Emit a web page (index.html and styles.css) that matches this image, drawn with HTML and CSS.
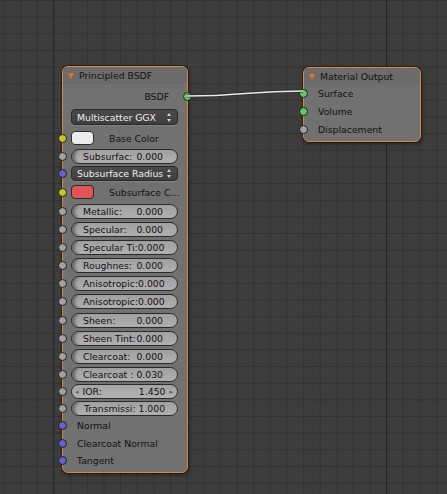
FILE: index.html
```html
<!DOCTYPE html>
<html>
<head>
<meta charset="utf-8">
<link rel="stylesheet" href="styles.css">
</head>
<body>
<div class="canvas">
  <svg class="wire" width="447" height="494" viewBox="0 0 447 494">
    <path d="M187 96 C245 96 245 91 303 91" fill="none" stroke="#2a2a2a" stroke-width="3.2"/>
    <path d="M187 96 C245 96 245 91 303 91" fill="none" stroke="#ececec" stroke-width="1.6"/>
  </svg>

  <div class="node bsdf">
    <div class="header"><span class="tri"></span><span class="title">Principled BSDF</span></div>
    <div class="row out"><span class="label">BSDF</span><span class="sock sock-out green"></span></div>
    <div class="row r24"><div class="dropdown"><span>Multiscatter GGX</span><span class="updown"></span></div></div>
    <div class="row"><span class="sock yellow"></span><span class="swatch white"></span><span class="label swl">Base Color</span></div>
    <div class="row"><span class="sock gray"></span><div class="slider"><span>Subsurfac:</span><span>0.000</span></div></div>
    <div class="row r17"><span class="sock blue"></span><div class="dropdown small"><span>Subsurface Radius</span><span class="updown"></span></div></div>
    <div class="row r20"><span class="sock yellow"></span><span class="swatch red"></span><span class="label swl">Subsurface C...</span></div>
    <div class="row"><span class="sock gray"></span><div class="slider"><span>Metallic:</span><span>0.000</span></div></div>
    <div class="row"><span class="sock gray"></span><div class="slider"><span>Specular:</span><span>0.000</span></div></div>
    <div class="row"><span class="sock gray"></span><div class="slider"><span>Specular Ti:</span><span>0.000</span></div></div>
    <div class="row"><span class="sock gray"></span><div class="slider"><span>Roughnes:</span><span>0.000</span></div></div>
    <div class="row"><span class="sock gray"></span><div class="slider"><span>Anisotropic:</span><span>0.000</span></div></div>
    <div class="row r19"><span class="sock gray"></span><div class="slider"><span>Anisotropic:</span><span>0.000</span></div></div>
    <div class="row"><span class="sock gray"></span><div class="slider"><span>Sheen:</span><span>0.000</span></div></div>
    <div class="row"><span class="sock gray"></span><div class="slider"><span>Sheen Tint:</span><span>0.000</span></div></div>
    <div class="row"><span class="sock gray"></span><div class="slider"><span>Clearcoat:</span><span>0.000</span></div></div>
    <div class="row"><span class="sock gray"></span><div class="slider"><span>Clearcoat :</span><span>0.030</span></div></div>
    <div class="row r17"><span class="sock gray"></span><div class="slider num"><span class="arr">&#9666;</span><span class="nl">IOR:</span><span class="nv">1.450</span><span class="arr">&#9656;</span></div></div>
    <div class="row r17"><span class="sock gray"></span><div class="slider center"><span>Transmissi: 1.000</span></div></div>
    <div class="row r17"><span class="sock blue"></span><span class="label">Normal</span></div>
    <div class="row"><span class="sock blue"></span><span class="label">Clearcoat Normal</span></div>
    <div class="row r17"><span class="sock blue"></span><span class="label">Tangent</span></div>
  </div>

  <div class="node output">
    <div class="header"><span class="tri"></span><span class="title">Material Output</span></div>
    <div class="row r17"><span class="sock green"></span><span class="label">Surface</span></div>
    <div class="row"><span class="sock green"></span><span class="label">Volume</span></div>
    <div class="row"><span class="sock gray"></span><span class="label">Displacement</span></div>
  </div>
</div>
</body>
</html>
```

FILE: styles.css
```css
* { box-sizing: border-box; }
html, body { margin: 0; padding: 0; background: #3d3d3d; }
.canvas {
  position: relative;
  width: 447px;
  height: 494px;
  overflow: hidden;
  background-color: #3d3d3d;
  background-image:
    linear-gradient(to right, #252525 1px, transparent 1px),
    linear-gradient(to right, #323232 1px, transparent 1px),
    linear-gradient(to bottom, #323232 1px, transparent 1px);
  background-size: 333px 100%, 16.65px 100%, 100% 16.65px;
  background-position: 53px 0, 3.6px 0, 0 0;
  font-family: "DejaVu Sans", sans-serif;
  font-size: 9.3px;
  color: #111;
}
.wire { position: absolute; left: 0; top: 0; z-index: 2; }
.node {
  position: absolute;
  z-index: 1;
  background: #717171;
  border: 1px solid #d98a3c;
  border-radius: 6px;
  box-shadow: 0 0 0 1px rgba(0,0,0,0.35), 1px 2px 4px rgba(0,0,0,0.4);
  display: flex;
  flex-direction: column;
  padding: 0 8px 3px 8px;
}
.bsdf { left: 62px; top: 66px; width: 126px; height: 407px; }
.output { left: 303px; top: 67px; width: 118px; height: 75px; }
.header {
  height: 17px;
  margin: 0 -8px 3px -8px;
  padding: 0 0 0 5px;
  display: flex;
  align-items: center;
  background: #6c6c6c;
  border-radius: 5px 5px 0 0;
}
.output .header { margin-bottom: 0; }
.tri {
  width: 0; height: 0;
  border-left: 3.5px solid transparent;
  border-right: 3.5px solid transparent;
  border-top: 6px solid #e0701e;
  margin-right: 5px;
}
.title { color: #111; white-space: nowrap; }
.row {
  position: relative;
  height: 18px;
  display: flex;
  align-items: center;
  flex: none;
}
.r17 { height: 17px; }
.r19 { height: 19px; }
.r20 { height: 20px; }
.r24 { height: 24px; }
.out { justify-content: flex-end; }
.sock {
  position: absolute;
  left: -13px;
  top: 50%;
  width: 9px;
  height: 9px;
  margin-top: -4.5px;
  border-radius: 50%;
  border: 1px solid #1e1e1e;
  z-index: 3;
}
.output .sock { left: -13px; }
.sock-out { left: auto; right: -13px; }
.green { background: #63c763; }
.gray { background: #a1a1a1; }
.yellow { background: #c7c729; }
.blue { background: #6363c7; }
.label { white-space: nowrap; color: #111; padding-left: 6px; }
.out .label { padding-left: 0; padding-right: 10px; }
.output .label { padding-left: 6px; }
.swl { padding-left: 15px; }
.dropdown {
  width: 107px;
  height: 16px;
  background: linear-gradient(#4a4a4a, #3e3e3e);
  border: 1px solid #2a2a2a;
  border-radius: 4px;
  color: #f0f0f0;
  display: flex;
  align-items: center;
  justify-content: space-between;
  padding: 0 5px 0 5px;
  white-space: nowrap;
  box-shadow: 0 1px 0 rgba(255,255,255,0.12);
}
.dropdown.small { height: 15px; }
.updown {
  position: relative;
  width: 5px;
  height: 9px;
}
.updown::before, .updown::after {
  content: "";
  position: absolute;
  left: 0;
  border-left: 2.5px solid transparent;
  border-right: 2.5px solid transparent;
}
.updown::before { top: 0; border-bottom: 3px solid #cfcfcf; }
.updown::after { bottom: 0; border-top: 3px solid #cfcfcf; }
.swatch {
  width: 23px;
  height: 14px;
  border-radius: 4px;
  border: 1px solid #2c2c2c;
  flex: none;
}
.white { background: #ececec; }
.red { background: #e05555; }
.slider {
  width: 107px;
  height: 15px;
  border: 1px solid #2a2a2a;
  border-radius: 8px;
  background: linear-gradient(#a0a0a0, #b0b0b0);
  box-shadow: inset 5px 0 3px -2px rgba(0,0,0,0.35);
  display: flex;
  align-items: center;
  justify-content: space-between;
  padding: 0 14px 0 11px;
  white-space: nowrap;
  overflow: hidden;
  color: #111;
}
.slider.center { justify-content: center; padding: 0 4px; }
.slider.num {
  padding: 0 4px 0 3px;
  box-shadow: none;
  background: linear-gradient(#a4a4a4, #b2b2b2);
}
.arr { font-size: 7px; color: #666; }
.nl { margin-left: 4px; flex: 1; }
.nv { margin-right: 4px; }
```
